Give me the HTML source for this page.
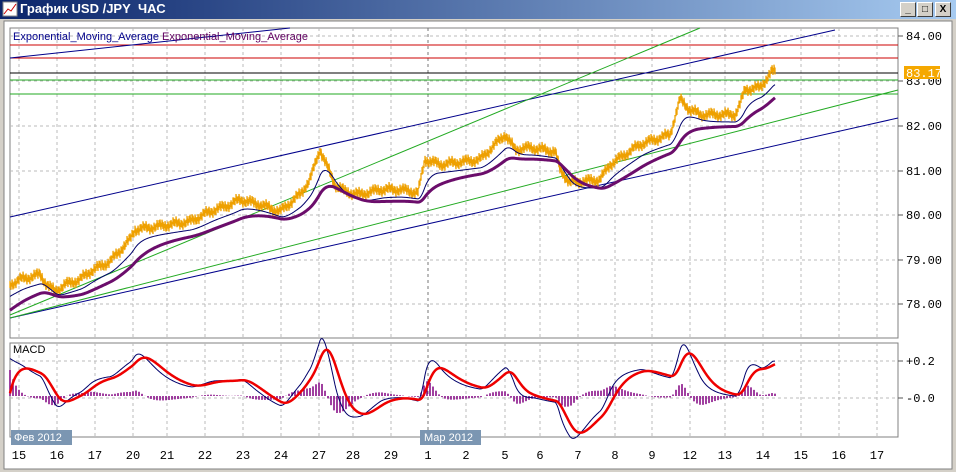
<!DOCTYPE html><html><head><meta charset="utf-8"><style>
body{margin:0;width:956px;height:472px;overflow:hidden;background:#d4d0c8;font-family:"Liberation Sans",sans-serif}
#t{position:absolute;left:0;top:0;width:956px;height:19px;background:linear-gradient(90deg,#0a246a,#a6caf0)}
#t span{position:absolute;left:20px;top:1px;color:#fff;font-weight:bold;font-size:13px}
.b{position:absolute;top:2px;width:14px;height:13px;background:#d4d0c8;border:1px solid;border-color:#fff #404040 #404040 #fff;font:bold 10px "Liberation Sans";text-align:center;line-height:13px}
</style></head><body>
<div id="t"><svg width="16" height="16" style="position:absolute;left:2px;top:1px"><rect x="1" y="1" width="14" height="14" fill="#fff" stroke="#888"/><path d="M2 13L6 8 9 10 14 3" stroke="#c00" fill="none"/></svg><span>График USD /JPY&nbsp; ЧАС</span>
<div class="b" style="left:900px">_</div><div class="b" style="left:917px">□</div><div class="b" style="left:935px">X</div></div>
<svg id="s" width="956" height="453" style="position:absolute;left:0;top:19px" font-family="Liberation Mono, monospace" font-size="11"></svg>
<script>
var S=document.getElementById('s'),h='';
h+='<rect x="0" y="0" width="956" height="453" fill="#d4d0c8"/><rect x="4" y="2" width="948" height="448" fill="#fff" stroke="#808080"/>';
var o=-19;function Y(y){return y+o}
h+='<rect x="10" y="'+Y(28)+'" width="888" height="310" fill="#fff" stroke="#808080"/>';
h+='<rect x="10" y="'+Y(343)+'" width="888" height="94" fill="#fff" stroke="#808080"/>';
var xs=[19,57,95,133,167,205,243,281,319,353,391,428,466,505,540,578,615,652,690,725,763,801,839,877],lb=['15','16','17','20','21','22','23','24','27','28','29','1','2','5','6','7','8','9','12','13','14','15','16','17'];
xs.forEach(function(x,i){var c=i==11?'#777':'#bbb';h+='<line x1="'+x+'" y1="'+Y(28)+'" x2="'+x+'" y2="'+Y(338)+'" stroke="'+c+'" stroke-dasharray="3,3"/><line x1="'+x+'" y1="'+Y(343)+'" x2="'+x+'" y2="'+Y(437)+'" stroke="'+c+'" stroke-dasharray="3,3"/><text x="'+x+'" y="'+Y(459)+'" text-anchor="middle" font-size="12" fill="#000">'+lb[i]+'</text>';});
[[36,'84.00'],[81,'83.00'],[126,'82.00'],[171,'81.00'],[215,'80.00'],[260,'79.00'],[304,'78.00']].forEach(function(a){h+='<line x1="10" y1="'+Y(a[0])+'" x2="898" y2="'+Y(a[0])+'" stroke="#bbb" stroke-dasharray="3,3"/><line x1="898" y1="'+Y(a[0])+'" x2="903" y2="'+Y(a[0])+'" stroke="#555"/><text x="906" y="'+Y(a[0]+4)+'" font-size="12">'+a[1]+'</text>'});
[[361,'+0.2'],[398,'-0.0']].forEach(function(a){h+='<line x1="10" y1="'+Y(a[0])+'" x2="898" y2="'+Y(a[0])+'" stroke="#bbb" stroke-dasharray="3,3"/><line x1="898" y1="'+Y(a[0])+'" x2="903" y2="'+Y(a[0])+'" stroke="#555"/><text x="906" y="'+Y(a[0]+4)+'" font-size="12">'+a[1]+'</text>'});
function L(x1,y1,x2,y2,c,w){h+='<line x1="'+x1+'" y1="'+Y(y1)+'" x2="'+x2+'" y2="'+Y(y2)+'" stroke="'+c+'" stroke-width="'+(w||1)+'"/>'}
L(10,45,898,45,'#c00');L(10,58,898,58,'#c00');L(10,73,898,73,'#000');L(10,80,898,80,'#2a2');L(10,94,898,94,'#2a2');
L(10,217,835,30,'#00008b');L(10,318,898,118,'#00008b');L(10,58,290,28,'#00008b');
L(10,318,898,90,'#2a2');L(10,315,700,28,'#2a2');
var K=[[10,285],[20,280],[40,275],[47,285],[55,292],[65,285],[80,280],[90,272],[110,262],[130,240],[135,230],[150,228],[170,225],[190,222],[210,212],[230,205],[240,200],[260,205],[280,212],[300,195],[310,180],[315,165],[320,150],[325,162],[335,185],[345,192],[360,195],[380,190],[400,190],[418,193],[425,160],[440,165],[480,160],[505,135],[515,150],[530,148],[555,152],[560,170],[570,183],[600,180],[610,165],[640,145],[670,135],[680,100],[690,110],[700,115],[735,115],[740,105],[745,90],[760,88],[772,72],[775,72]];
var P=[],k=0;for(var x=10;x<=775;x++){while(K[k+1][0]<x)k++;var a=K[k],b=K[k+1],t=(x-a[0])/(b[0]-a[0]);P.push(a[1]+(b[1]-a[1])*t);}
var d='';P.forEach(function(y,i){var j=(Math.sin(i*2.3)*2+Math.sin(i*0.41)*2);d+=(i?'L':'M')+(10+i)+' '+Y(y+j+3)+'L'+(10+i)+' '+Y(y+j-4)});
h+='<path d="'+d+'" stroke="#eea000" fill="none" stroke-width="1.3"/>';
function E(arr,al,s){var r=[],e=s;arr.forEach(function(v){e+=al*(v-e);r.push(e)});return r}
var F=E(P,0.12,290),Sl=E(P,0.05,300);
function pl(arr,c,w,f){var d='';arr.forEach(function(v,i){d+=(i?'L':'M')+(10+i)+' '+Y(f(v,i))});h+='<path d="'+d+'" stroke="'+c+'" fill="none" stroke-width="'+w+'"/>'}
pl(F,'#00006b',1,function(v){return v+7});pl(Sl,'#6b0d6b',3,function(v){return v+11});
var M=P.map(function(v,i){return Sl[i]-F[i]}),G=E(M,0.12,0);
for(var i=0;i<M.length;i+=3){var hv=(M[i]-G[i])*3;h+='<line x1="'+(10+i)+'" y1="'+Y(396)+'" x2="'+(10+i)+'" y2="'+Y(396-hv)+'" stroke="#800080" stroke-width="1.5"/>'}
pl(M,'#00006b',1,function(v){return 398-v*4});pl(G,'#e00',2.5,function(v){return 398-v*4});
h+='<text x="13" y="'+Y(40)+'" fill="#00008b" font-size="11" font-family="Liberation Sans">Exponential_Moving_Average <tspan fill="#600060">Exponential_Moving_Average</tspan></text>';
h+='<text x="13" y="'+Y(353)+'" fill="#000" font-size="11" font-family="Liberation Sans">MACD</text>';
h+='<rect x="904" y="'+Y(66)+'" width="36" height="13" fill="#f5a800"/><text x="906" y="'+Y(77)+'" fill="#fff" font-size="12">83.17</text>';
h+='<rect x="11" y="'+Y(430)+'" width="61" height="15" fill="#7b96b2"/><text x="14" y="'+Y(441)+'" fill="#fff" font-size="11" font-family="Liberation Sans">Фев 2012</text>';
h+='<rect x="420" y="'+Y(430)+'" width="61" height="15" fill="#7b96b2"/><text x="424" y="'+Y(441)+'" fill="#fff" font-size="11" font-family="Liberation Sans">Мар 2012</text>';
S.innerHTML=h;
</script></body></html>
